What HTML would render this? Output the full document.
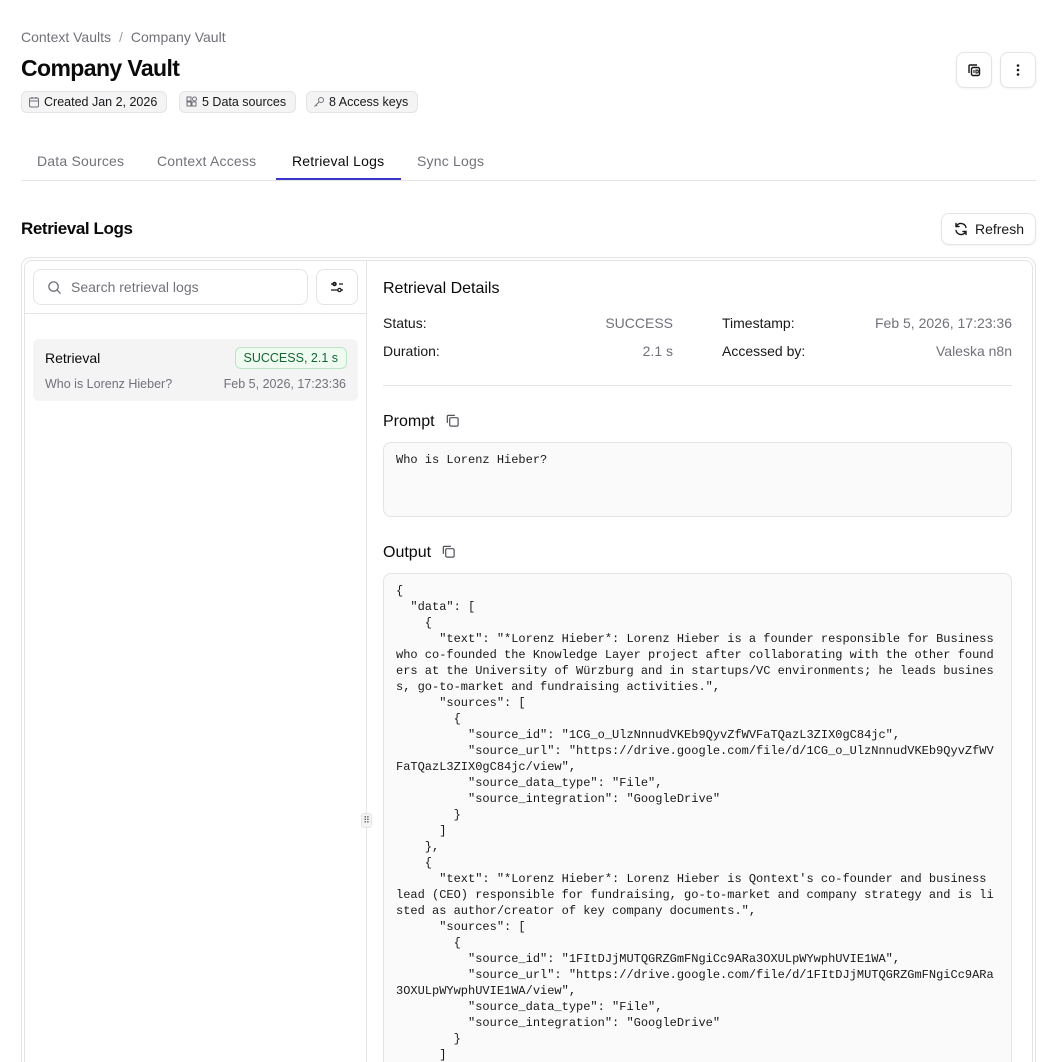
<!DOCTYPE html>
<html><head><meta charset="utf-8"><style>
*{box-sizing:border-box;margin:0;padding:0}
html,body{width:1046px;height:1062px;overflow:hidden}
body{background:#fff;font-family:"Liberation Sans",sans-serif;color:#0a0a0a;position:relative}
.abs{position:absolute}
.crumb{left:21px;top:29px;font-size:14px;color:#71717a}
.crumb span{margin:0 8px;color:#a1a1aa}
h1{position:absolute;left:21px;top:55px;font-size:23px;font-weight:700;letter-spacing:-0.6px}
.pill{position:absolute;top:91px;height:22px;border:1px solid #e4e4e7;background:#f4f4f5;border-radius:6px;font-size:12.5px;display:flex;align-items:center;padding:0 9px 0 6px;gap:4px;color:#18181b}
.ib{position:absolute;width:36px;height:36px;border:1px solid #e4e4e7;border-radius:8px;background:#fff;display:flex;align-items:center;justify-content:center;box-shadow:0 1px 2px rgba(0,0,0,.05)}
.tab{position:absolute;top:153px;font-size:14px;color:#71717a;letter-spacing:0.2px}
.code{font-family:"Liberation Mono",monospace;font-size:12px;line-height:16px;white-space:pre;color:#18181b;overflow:hidden}
.lbl{font-size:14px;color:#18181b}
.val{font-size:14px;color:#71717a;text-align:right}
</style></head><body>
<div class="abs crumb">Context Vaults<span>/</span>Company Vault</div>
<h1>Company Vault</h1>
<div class="pill" style="left:21px"><svg width="12" height="12" viewBox="0 0 12 12" fill="none" stroke="#71717a" stroke-width="1"><rect x="1.5" y="2" width="9" height="9" rx="1.5"/><path d="M1.5 5h9M4 1v2M8 1v2"/></svg>Created Jan 2, 2026</div>
<div class="pill" style="left:179px"><svg width="12" height="12" viewBox="0 0 12 12" fill="none" stroke="#71717a" stroke-width="1"><rect x="1" y="6" width="4" height="4"/><rect x="6" y="6" width="4" height="4"/><rect x="1" y="1" width="4" height="4"/><circle cx="8.5" cy="3" r="2"/></svg>5 Data sources</div>
<div class="pill" style="left:306px"><svg width="12" height="12" viewBox="0 0 12 12" fill="none" stroke="#71717a" stroke-width="1"><circle cx="8" cy="4" r="2.5"/><path d="M6 6L1.5 10.5M3 9l1 1"/></svg>8 Access keys</div>
<div class="ib" style="left:956px;top:52px"><svg width="16" height="16" viewBox="0 0 16 16" fill="none" stroke="#18181b" stroke-width="1.4"><path d="M3 11V4a1 1 0 0 1 1-1h7"/><rect x="5.5" y="5.5" width="8" height="8" rx="1.5"/><path d="M8 8v3M10 8h.8a1.5 1.5 0 0 1 0 3H10z" stroke-width="1.1"/></svg></div>
<div class="ib" style="left:1000px;top:52px"><svg width="16" height="16" viewBox="0 0 16 16" fill="#18181b"><circle cx="8" cy="3.5" r="1.3"/><circle cx="8" cy="8" r="1.3"/><circle cx="8" cy="12.5" r="1.3"/></svg></div>
<div class="tab" style="left:37px">Data Sources</div>
<div class="tab" style="left:157px">Context Access</div>
<div class="tab" style="left:292px;color:#0a0a0a">Retrieval Logs</div>
<div class="tab" style="left:417px">Sync Logs</div>
<div class="abs" style="left:21px;top:180px;width:1015px;height:1px;background:#e4e4e7"></div>
<div class="abs" style="left:276px;top:178px;width:125px;height:2px;background:#3b35c9"></div>
<div class="abs" style="left:21px;top:219px;font-size:17px;font-weight:700;letter-spacing:-0.4px">Retrieval Logs</div>
<div class="ib" style="left:941px;top:213px;width:95px;height:32px;gap:6px;font-size:14px;color:#18181b"><svg width="16" height="16" viewBox="0 0 16 16" fill="none" stroke="#18181b" stroke-width="1.4" stroke-linecap="round"><path d="M13 6.5A5.2 5.2 0 0 0 3.5 5M3 9.5A5.2 5.2 0 0 0 12.5 11"/><path d="M3 2.5V5.5H6M13 13.5V10.5H10"/></svg>Refresh</div>
<div class="abs" style="left:21px;top:257px;width:1015px;height:830px;border:1px solid #e4e4e7;border-radius:10px"></div>
<div class="abs" style="left:24px;top:260px;width:1009px;height:830px;border:1px solid #e4e4e7;border-radius:8px"></div>
<div class="abs" style="left:366px;top:261px;width:1px;height:810px;background:#e4e4e7"></div>
<div class="abs" style="left:361px;top:813px;width:11px;height:15px;border:1px solid #e4e4e7;background:#f4f4f5;border-radius:3px;font-size:9px;line-height:12px;text-align:center;color:#52525b">⠿</div>
<div class="abs" style="left:33px;top:269px;width:275px;height:36px;border:1px solid #e4e4e7;border-radius:8px;display:flex;align-items:center;padding-left:13px;gap:9px;font-size:14px;color:#71717a"><svg width="15" height="15" viewBox="0 0 16 16" fill="none" stroke="#71717a" stroke-width="1.4"><circle cx="7" cy="7" r="5"/><path d="M11 11l3.5 3.5"/></svg>Search retrieval logs</div>
<div class="ib" style="left:316px;top:269px;width:42px;height:36px;box-shadow:none"><svg width="16" height="16" viewBox="0 0 16 16" fill="none" stroke="#18181b" stroke-width="1.3"><path d="M2 5h5M10 5h4M2 11h7M12 11h2"/><circle cx="5.5" cy="5" r="1.6"/><circle cx="10.5" cy="11" r="1.6"/></svg></div>
<div class="abs" style="left:25px;top:313px;width:341px;height:1px;background:#e4e4e7"></div>
<div class="abs" style="left:33px;top:339px;width:325px;height:62px;background:#f4f4f5;border-radius:6px">
<div class="abs" style="left:12px;top:11px;font-size:14px">Retrieval</div>
<div class="abs" style="right:11px;top:8px;height:22px;border:1px solid #bbe5c6;background:#effaf1;border-radius:6px;color:#166534;font-size:12.5px;padding:0 8px;line-height:20px">SUCCESS, 2.1 s</div>
<div class="abs" style="left:12px;top:38px;font-size:12.5px;color:#71717a">Who is Lorenz Hieber?</div>
<div class="abs" style="right:12px;top:38px;font-size:12.5px;color:#71717a">Feb 5, 2026, 17:23:36</div>
</div>
<div class="abs" style="left:383px;top:280px;font-size:16px">Retrieval Details</div>
<div class="abs lbl" style="left:383px;top:315px">Status:</div>
<div class="abs val" style="right:373px;top:315px">SUCCESS</div>
<div class="abs lbl" style="left:722px;top:315px">Timestamp:</div>
<div class="abs val" style="right:34px;top:315px">Feb 5, 2026, 17:23:36</div>
<div class="abs lbl" style="left:383px;top:343px">Duration:</div>
<div class="abs val" style="right:373px;top:343px">2.1 s</div>
<div class="abs lbl" style="left:722px;top:343px">Accessed by:</div>
<div class="abs val" style="right:34px;top:343px">Valeska n8n</div>
<div class="abs" style="left:383px;top:385px;width:629px;height:1px;background:#e4e4e7"></div>
<div class="abs" style="left:383px;top:413px;font-size:16px">Prompt <svg style="vertical-align:-2px;margin-left:6px" width="15" height="15" viewBox="0 0 16 16" fill="none" stroke="#52525b" stroke-width="1.3"><rect x="5" y="5" width="9" height="9" rx="1.5"/><path d="M2.5 10.5V3.5a1 1 0 0 1 1-1h7"/></svg></div>
<div class="abs code" style="left:383px;top:442px;width:629px;height:75px;border:1px solid #e4e4e7;background:#fafafa;border-radius:8px;padding:9px 12px">Who is Lorenz Hieber?</div>
<div class="abs" style="left:383px;top:544px;font-size:16px">Output <svg style="vertical-align:-2px;margin-left:6px" width="15" height="15" viewBox="0 0 16 16" fill="none" stroke="#52525b" stroke-width="1.3"><rect x="5" y="5" width="9" height="9" rx="1.5"/><path d="M2.5 10.5V3.5a1 1 0 0 1 1-1h7"/></svg></div>
<div class="abs code" style="left:383px;top:573px;width:629px;height:520px;border:1px solid #e4e4e7;background:#fafafa;border-radius:8px;padding:9px 12px">{
  "data": [
    {
      "text": "*Lorenz Hieber*: Lorenz Hieber is a founder responsible for Business
who co-founded the Knowledge Layer project after collaborating with the other found
ers at the University of Würzburg and in startups/VC environments; he leads busines
s, go-to-market and fundraising activities.",
      "sources": [
        {
          "source_id": "1CG_o_UlzNnnudVKEb9QyvZfWVFaTQazL3ZIX0gC84jc",
          "source_url": "https://drive.google.com/file/d/1CG_o_UlzNnnudVKEb9QyvZfWV
FaTQazL3ZIX0gC84jc/view",
          "source_data_type": "File",
          "source_integration": "GoogleDrive"
        }
      ]
    },
    {
      "text": "*Lorenz Hieber*: Lorenz Hieber is Qontext's co-founder and business
lead (CEO) responsible for fundraising, go-to-market and company strategy and is li
sted as author/creator of key company documents.",
      "sources": [
        {
          "source_id": "1FItDJjMUTQGRZGmFNgiCc9ARa3OXULpWYwphUVIE1WA",
          "source_url": "https://drive.google.com/file/d/1FItDJjMUTQGRZGmFNgiCc9ARa
3OXULpWYwphUVIE1WA/view",
          "source_data_type": "File",
          "source_integration": "GoogleDrive"
        }
      ]
    }
  ]
}</div>
</body></html>
